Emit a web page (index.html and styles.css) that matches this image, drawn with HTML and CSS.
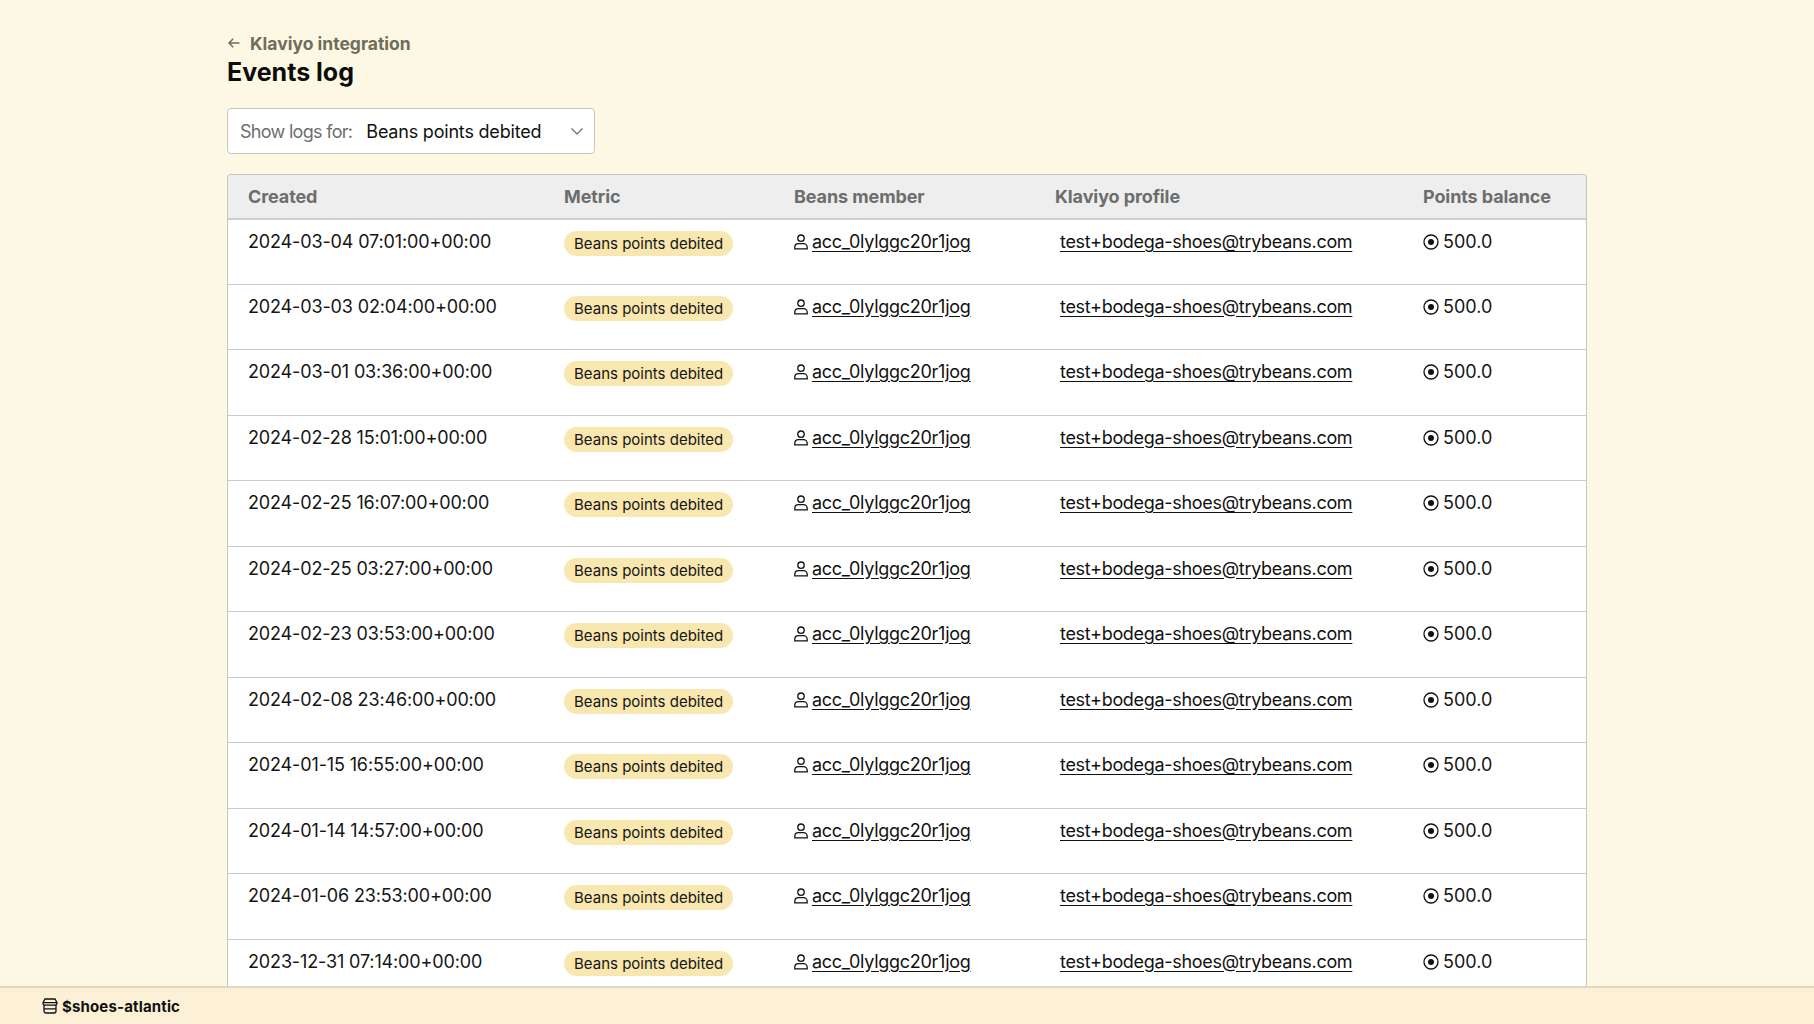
FILE: index.html
```html
<!DOCTYPE html>
<html lang="en">
<head>
<meta charset="utf-8">
<title>Events log</title>
<link rel="stylesheet" href="styles.css">
</head>
<body>
<main class="page">
  <a class="back"><svg class="back-icon" viewBox="0 0 14 14"><path d="M12.500 7H2M6.200 2.800 2 7l4.200 4.200"/></svg>Klaviyo integration</a>
  <h1 class="title">Events log</h1>
  <div class="select"><span class="select-label">Show logs for:</span><span class="select-value">Beans points debited</span><svg class="chevron" viewBox="0 0 14 14"><path d="M1.500 4.500 7 10l5.500-5.500"/></svg></div>
  <table class="log">
    <colgroup><col class="c1"><col class="c2"><col class="c3"><col class="c4"><col class="c5"></colgroup>
    <thead><tr><th>Created</th><th>Metric</th><th>Beans member</th><th>Klaviyo profile</th><th>Points balance</th></tr></thead>
    <tbody id="rows"></tbody>
  </table>
</main>
<footer class="bar"><svg class="store" viewBox="0 0 16 16"><path d="M3 1h10l2 3.600v.7a1.800 1.800 0 0 1-1.800 1.800H2.800A1.800 1.800 0 0 1 1 5.300v-.7zM1 4.700h14M2 7.100h12v6a1.900 1.900 0 0 1-1.900 1.900H3.900A1.900 1.900 0 0 1 2 13.100zM2 10.800h12"/></svg>$shoes-atlantic</footer>
<script src="rows.js"></script>
</body>
</html>
```
FILE: rows.js
```js
var dates = ["2024-03-04 07:01:00+00:00","2024-03-03 02:04:00+00:00","2024-03-01 03:36:00+00:00","2024-02-28 15:01:00+00:00","2024-02-25 16:07:00+00:00","2024-02-25 03:27:00+00:00","2024-02-23 03:53:00+00:00","2024-02-08 23:46:00+00:00","2024-01-15 16:55:00+00:00","2024-01-14 14:57:00+00:00","2024-01-06 23:53:00+00:00","2023-12-31 07:14:00+00:00"];
var user = '<svg class="ico user" viewBox="0 0 16 16"><circle cx="8" cy="4.200" r="3.200"/><path d="M1.800 14.800v-1.600c0-2.100 1.700-3.600 3.700-3.600h5c2 0 3.700 1.500 3.700 3.600v1.600z"/></svg>';
var coin = '<svg class="ico coin" viewBox="0 0 16 16"><circle cx="8" cy="8" r="7"/><circle class="dot" cx="8" cy="8" r="3"/></svg>';
document.getElementById("rows").innerHTML = dates.map(function (d) {
  return '<tr><td class="date">' + d + '</td><td><span class="badge">Beans points debited</span></td>' +
    '<td>' + user + '<a class="link member">acc_0lylggc20r1jog</a></td>' +
    '<td><a class="link email">test+bodega-shoes@trybeans.com</a></td>' +
    '<td>' + coin + '<span>500.0</span></td></tr>';
}).join("");
```
FILE: styles.css
```css
* { box-sizing: border-box; }
html, body { height: 100%; margin: 0; }
body {
  display: flex;
  flex-direction: column;
  overflow: hidden;
  background: #fdf8e3;
  color: #111;
  font-family: Inter, "Liberation Sans", sans-serif;
}
.page { flex: 1; min-height: 0; overflow: hidden; padding: 32px 227px 0; }
.back { display: flex; align-items: center; height: 22px; color: #6f6d5c; font-size: 17.5px; font-weight: 700; }
.back-icon { width: 14px; height: 14px; margin-right: 9px; fill: none; stroke: #6f6d5c; stroke-width: 1.5; }
.title { margin: 2px 0 0; font-size: 25px; line-height: 32px; font-weight: 700; color: #0c0c0c; }
.select { display: flex; align-items: center; width: 368px; height: 46px; margin-top: 20px; padding: 0 10px 0 12px; background: #fff; border: 1px solid #c9c8c0; border-radius: 4px; font-size: 18px; }
.select-label { color: #6e6e6e; margin-right: 14px; letter-spacing: -0.7px; }
.select-value { flex: 1; color: #111; letter-spacing: -0.2px; }
.chevron { width: 14px; height: 14px; fill: none; stroke: #666; stroke-width: 1.2; }
.log { width: 1360px; margin-top: 20px; table-layout: fixed; border-collapse: separate; border-spacing: 0; background: #fff; border: 1px solid #c6c6c0; border-bottom: 0; border-radius: 4px 4px 0 0; font-size: 18px; }
.c1 { width: 316px; } .c2 { width: 230px; } .c3 { width: 261px; } .c4 { width: 368px; } .c5 { width: 183px; }
th { height: 45px; padding: 0 0 0 20px; background: #eeeeee; border-bottom: 2px solid #cfcfca; color: #6d6d6d; font-size: 18px; font-weight: 700; text-align: left; letter-spacing: -0.1px; }
th:first-child { border-top-left-radius: 4px; }
th:last-child { border-top-right-radius: 4px; }
td { height: 65.5px; padding: 11px 0 0 20px; vertical-align: top; white-space: nowrap; border-bottom: 1px solid #c9c9c6; line-height: 22px; color: #151515; }
tr:first-child td { height: 64.5px; }
.date { letter-spacing: -0.14px; }
.badge { display: inline-block; height: 25px; padding: 0 10px; background: #f8e7ae; border-radius: 13px; font-size: 15px; line-height: 25px; vertical-align: top; }
.ico { width: 16px; height: 16px; vertical-align: -2px; fill: none; stroke: #111; stroke-width: 1.3; }
.ico .dot { fill: #111; stroke: none; }
.user { margin: 0 3px 0 -1px; }
.coin { margin-right: 4px; }
.link { color: #111; text-decoration: underline; text-underline-offset: 3px; }
.member { letter-spacing: -0.27px; }
.email { margin-left: 5px; letter-spacing: -0.3px; }
.bar { flex: none; display: flex; align-items: center; height: 38px; padding-left: 42px; background: #fcf1d6; border-top: 2px solid #dcd8c2; font-size: 15px; font-weight: 700; color: #111; letter-spacing: 0.15px; }
.store { width: 16px; height: 16px; margin-right: 4px; fill: none; stroke: #111; stroke-width: 1.3; }
```
